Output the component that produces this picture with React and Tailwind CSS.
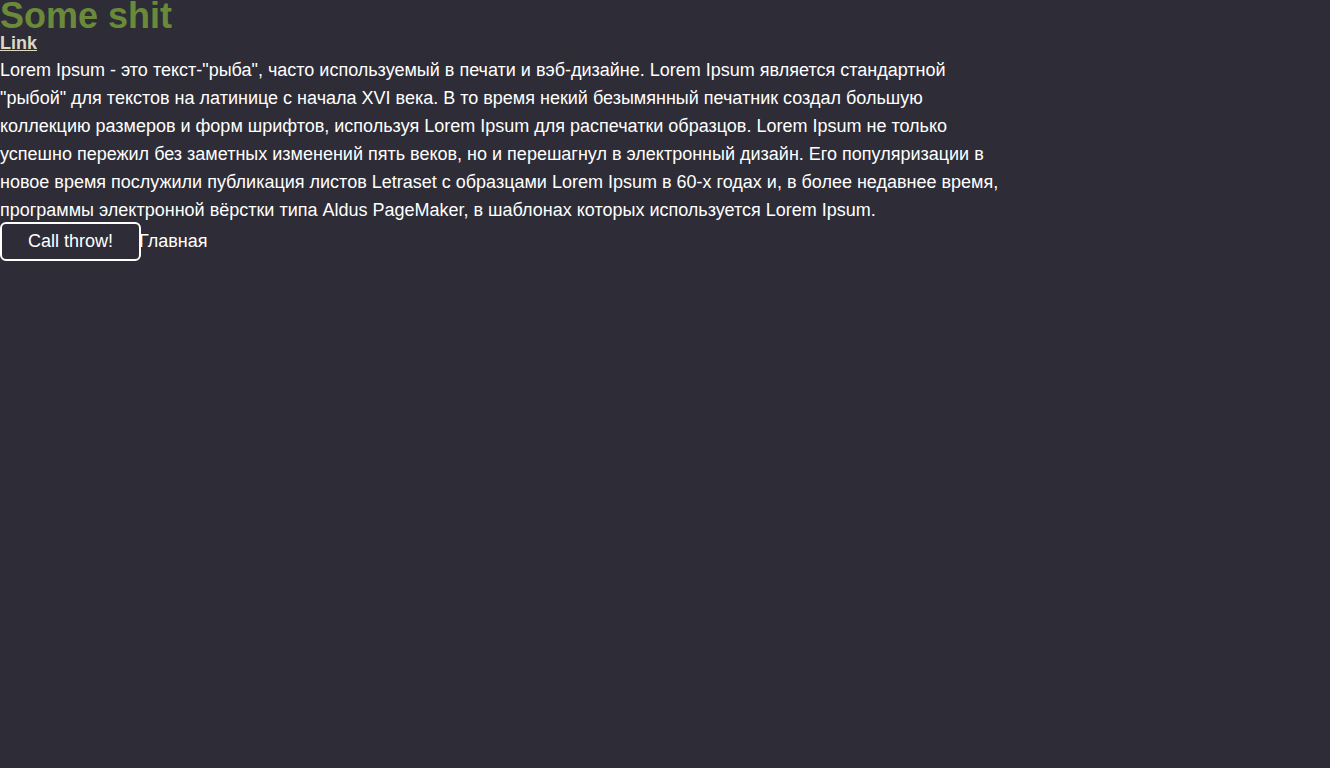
export default function App() {
  return (
    <div className="min-h-screen bg-[#2e2d37] text-white" style={{ fontFamily: '"Liberation Sans", Arial, sans-serif' }}>
      <h1 className="m-0 text-[36px] leading-[32px] font-bold text-[#6a8a3a]">Some shit</h1>
      <a href="#" className="block mb-[2px] text-[18px] leading-[22px] font-bold text-[#ddd9c4] underline">Link</a>
      <p className="w-[1010px] text-[18px] leading-[28px] whitespace-nowrap">
        Lorem Ipsum - это текст-"рыба", часто используемый в печати и вэб-дизайне. Lorem Ipsum является стандартной<br />
        "рыбой" для текстов на латинице с начала XVI века. В то время некий безымянный печатник создал большую<br />
        коллекцию размеров и форм шрифтов, используя Lorem Ipsum для распечатки образцов. Lorem Ipsum не только<br />
        успешно пережил без заметных изменений пять веков, но и перешагнул в электронный дизайн. Его популяризации в<br />
        новое время послужили публикация листов Letraset с образцами Lorem Ipsum в 60-х годах и, в более недавнее время,<br />
        программы электронной вёрстки типа Aldus PageMaker, в шаблонах которых используется Lorem Ipsum.
      </p>
      <div className="flex items-center -mt-[2px]">
        <button className="w-[141px] h-[39px] border-2 border-white rounded-[6px] text-[18px] text-white bg-transparent">Call throw!</button>
        <span className="text-[18px] -ml-[2px]">Главная</span>
      </div>
    </div>
  );
}
